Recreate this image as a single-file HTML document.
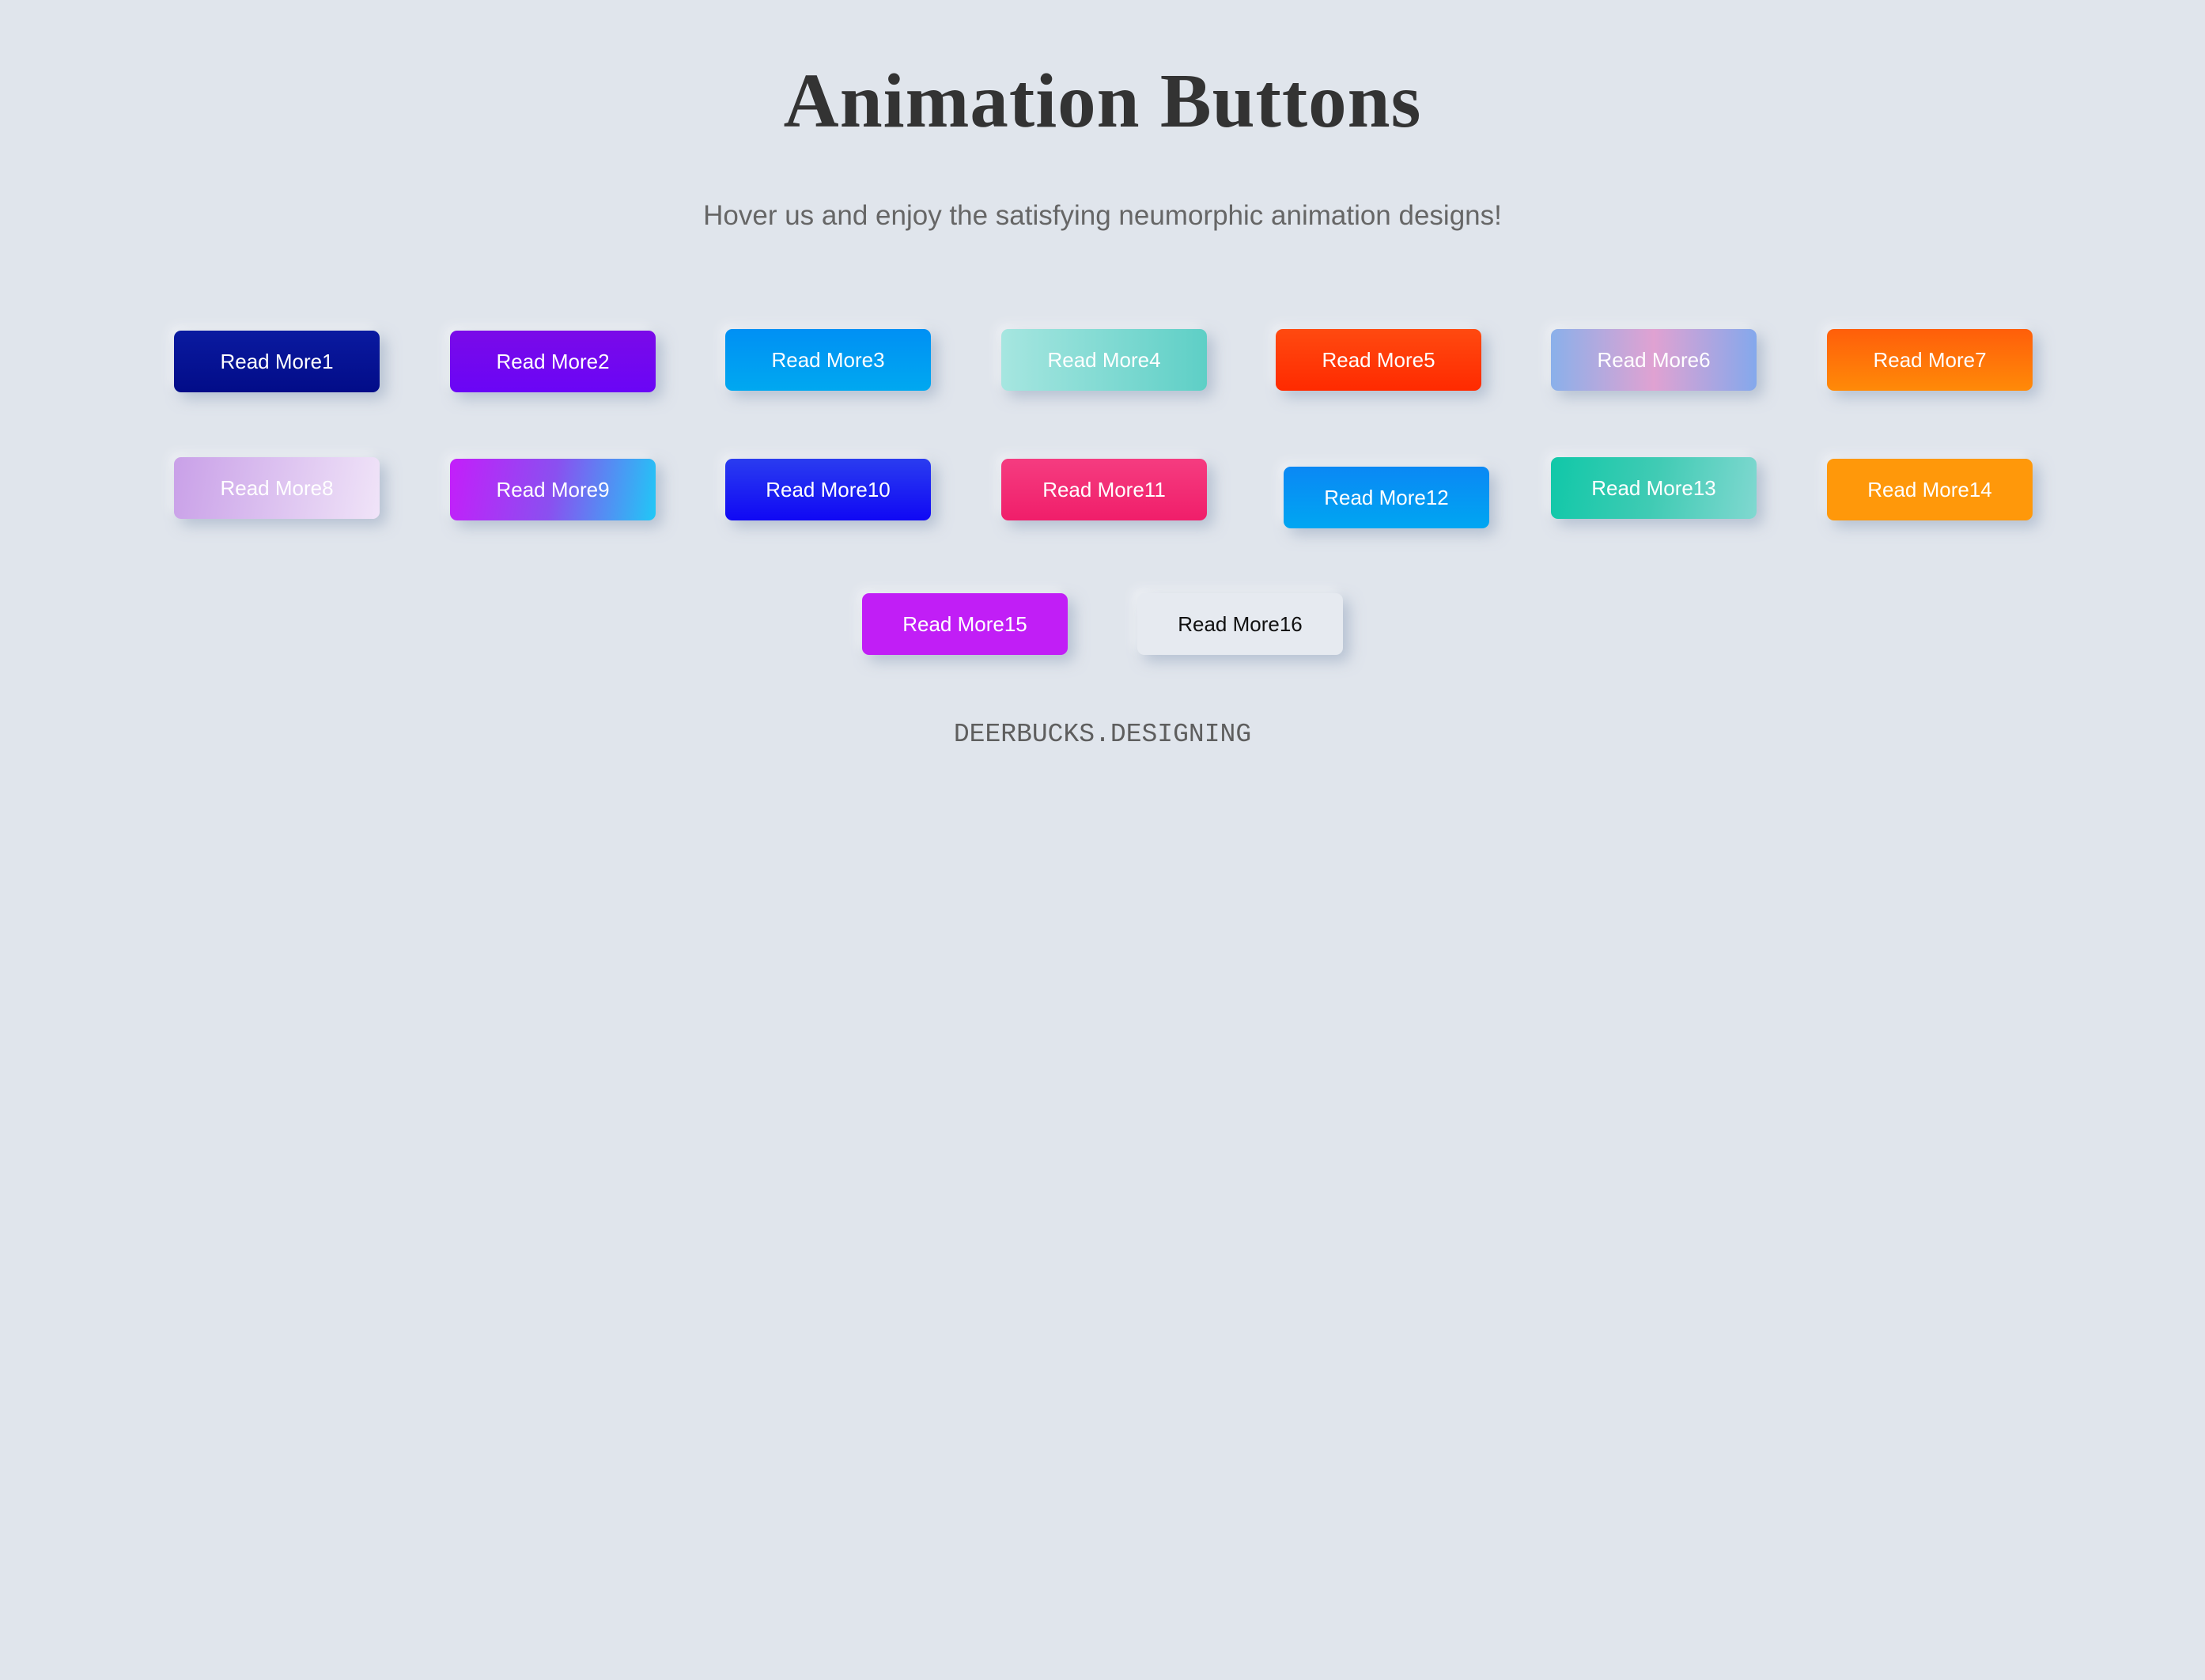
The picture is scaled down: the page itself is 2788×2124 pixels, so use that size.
<!DOCTYPE html>
<html><head><meta charset="utf-8"><style>
html,body{margin:0;padding:0;}
body{width:2788px;height:2124px;background:#e0e5ec;position:relative;overflow:hidden;font-family:"Liberation Sans",sans-serif;}
h1{position:absolute;left:0;width:2788px;top:72px;margin:0;text-align:center;font-family:"Liberation Serif",serif;font-weight:bold;font-size:97px;color:#333;letter-spacing:1px;}
.sub{position:absolute;left:0;width:2788px;top:253px;text-align:center;font-size:35px;color:#666;}
.b{position:absolute;width:260px;height:78px;border-radius:9px;color:#fff;font-size:26px;line-height:78px;text-align:center;box-shadow:8px 8px 18px rgba(163,177,198,.7),-6px -6px 14px rgba(255,255,255,.5);}
.foot{position:absolute;left:0;width:2788px;top:910px;text-align:center;font-family:"Liberation Mono",monospace;font-size:33px;color:#5e5e5e;}
</style></head><body>
<h1>Animation Buttons</h1>
<div class="sub">Hover us and enjoy the satisfying neumorphic animation designs!</div>
<div class="b" style="left:220px;top:418px;background:linear-gradient(#0a1aa0,#020c88)">Read More1</div>
<div class="b" style="left:569px;top:418px;background:linear-gradient(#7a0ae8,#6a05f6)">Read More2</div>
<div class="b" style="left:917px;top:416px;background:linear-gradient(#0090f4,#00a8f0)">Read More3</div>
<div class="b" style="left:1266px;top:416px;background:linear-gradient(90deg,#a6e6e0,#5ecfc6)">Read More4</div>
<div class="b" style="left:1613px;top:416px;background:linear-gradient(#ff4a10,#ff2a00)">Read More5</div>
<div class="b" style="left:1961px;top:416px;background:linear-gradient(90deg,#8ab0ea,#e0a2d2,#84a8ec)">Read More6</div>
<div class="b" style="left:2310px;top:416px;background:linear-gradient(#ff5e0a,#ff8a08)">Read More7</div>
<div class="b" style="left:220px;top:578px;background:linear-gradient(100deg,#c9a0e8,#f0e4f8)">Read More8</div>
<div class="b" style="left:569px;top:580px;background:linear-gradient(100deg,#c41efa,#8a50f0,#20c8f6)">Read More9</div>
<div class="b" style="left:917px;top:580px;background:linear-gradient(#2a3cf0,#1008f4)">Read More10</div>
<div class="b" style="left:1266px;top:580px;background:linear-gradient(#f53c80,#f01e6a)">Read More11</div>
<div class="b" style="left:1623px;top:590px;background:linear-gradient(#0a88f4,#00a6f2)">Read More12</div>
<div class="b" style="left:1961px;top:578px;background:linear-gradient(100deg,#10c8a8,#40cbb4,#80d8d0)">Read More13</div>
<div class="b" style="left:2310px;top:580px;background:#ff980a">Read More14</div>
<div class="b" style="left:1090px;top:750px;background:#c11ef6">Read More15</div>
<div class="b" style="left:1438px;top:750px;background:#e6eaf0;color:#111">Read More16</div>
<div class="foot">DEERBUCKS.DESIGNING</div>
</body></html>
